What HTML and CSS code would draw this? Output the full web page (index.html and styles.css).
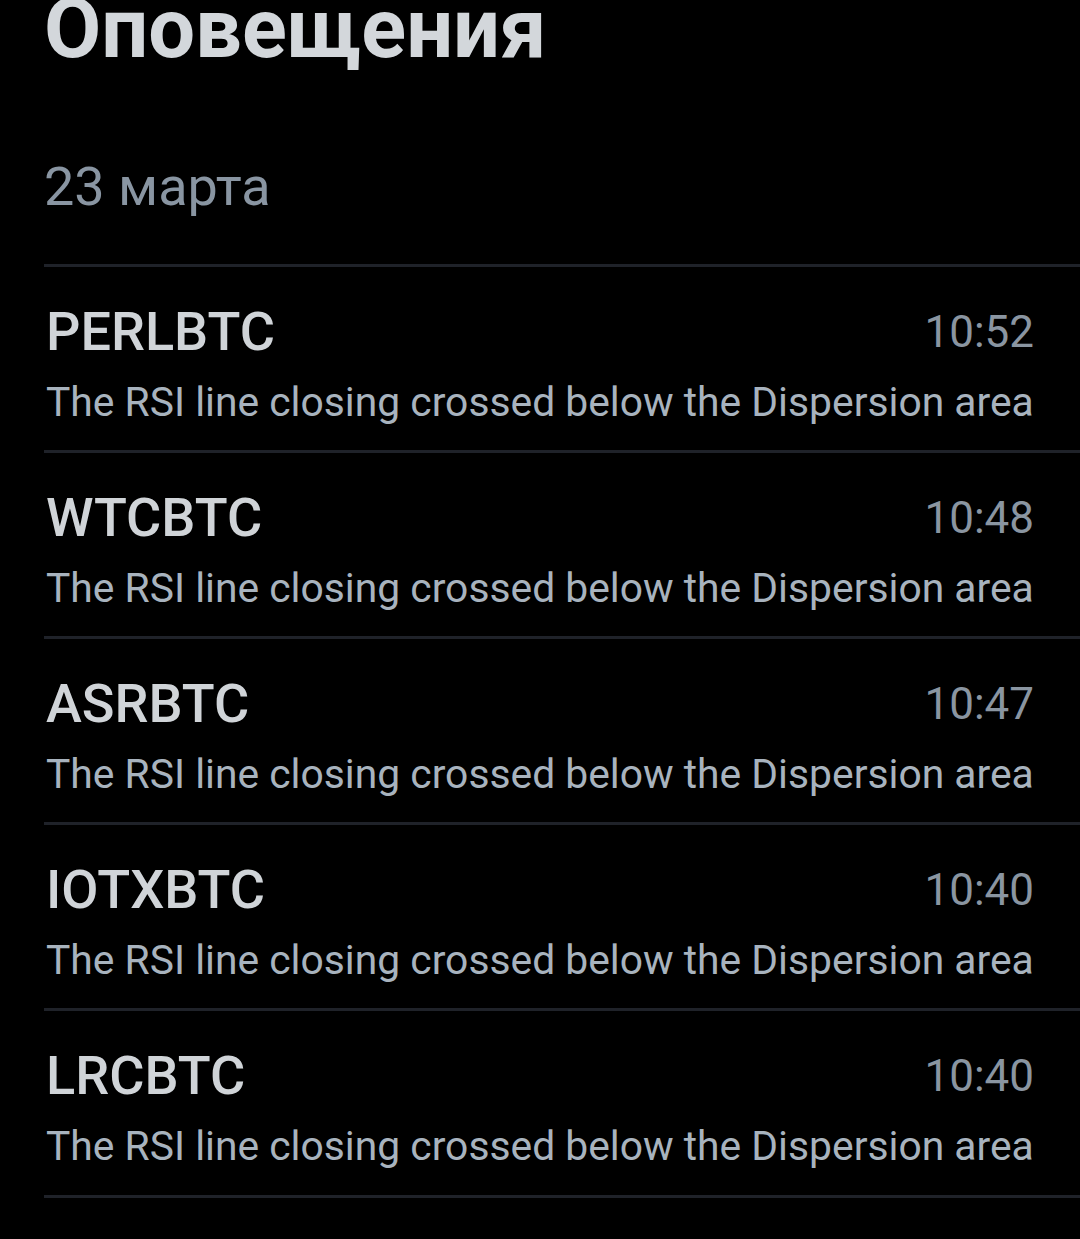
FILE: index.html
```html
<!DOCTYPE html>
<html>
<head>
  <meta charset="UTF-8">
  <title>Оповещения</title>
  <link rel="stylesheet" href="styles.css">
</head>
<body>
  <h1 class="title">Оповещения</h1>

  <div class="day">23 марта</div>

  <ul class="alerts">
    <li class="alert">
      <div class="alert-head">
        <span class="pair">PERLBTC</span>
        <span class="time">10:52</span>
      </div>
      <div class="msg">The RSI line closing crossed below the Dispersion area</div>
    </li>
    <li class="alert">
      <div class="alert-head">
        <span class="pair">WTCBTC</span>
        <span class="time">10:48</span>
      </div>
      <div class="msg">The RSI line closing crossed below the Dispersion area</div>
    </li>
    <li class="alert">
      <div class="alert-head">
        <span class="pair">ASRBTC</span>
        <span class="time">10:47</span>
      </div>
      <div class="msg">The RSI line closing crossed below the Dispersion area</div>
    </li>
    <li class="alert">
      <div class="alert-head">
        <span class="pair">IOTXBTC</span>
        <span class="time">10:40</span>
      </div>
      <div class="msg">The RSI line closing crossed below the Dispersion area</div>
    </li>
    <li class="alert">
      <div class="alert-head">
        <span class="pair">LRCBTC</span>
        <span class="time">10:40</span>
      </div>
      <div class="msg">The RSI line closing crossed below the Dispersion area</div>
    </li>
  </ul>
</body>
</html>
```

FILE: styles.css
```css
html, body {
  background: #000;
}
body {
  margin: 0;
  padding-left: 44px;
  font-family: Roboto, "Noto Sans", sans-serif;
  overflow: hidden;
  height: 1239px;
}
.title {
  margin: -13px 0 0;
  font-size: 83px;
  line-height: 1;
  font-weight: 700;
  color: #d3d7db;
}
.day {
  margin-top: 85px;
  font-size: 54px;
  line-height: 1.2;
  color: #8995a2;
}
.alerts {
  list-style: none;
  margin: 44px 0 0;
  padding: 0;
}
.alert {
  border-top: 3px solid #1f2229;
  padding: 33px 46px 23.4px 2px;
}
.alert:last-child {
  border-bottom: 3px solid #1f2229;
}
.alert-head {
  display: flex;
  justify-content: space-between;
  align-items: center;
}
.pair {
  font-size: 54px;
  line-height: 1.2;
  font-weight: 500;
  color: #d0d4d8;
}
.time {
  font-size: 44px;
  line-height: 1.2;
  color: #8a95a1;
}
.msg {
  margin-top: 13px;
  font-size: 40.8px;
  line-height: 1.2;
  white-space: nowrap;
  color: #a8b3be;
}
```
